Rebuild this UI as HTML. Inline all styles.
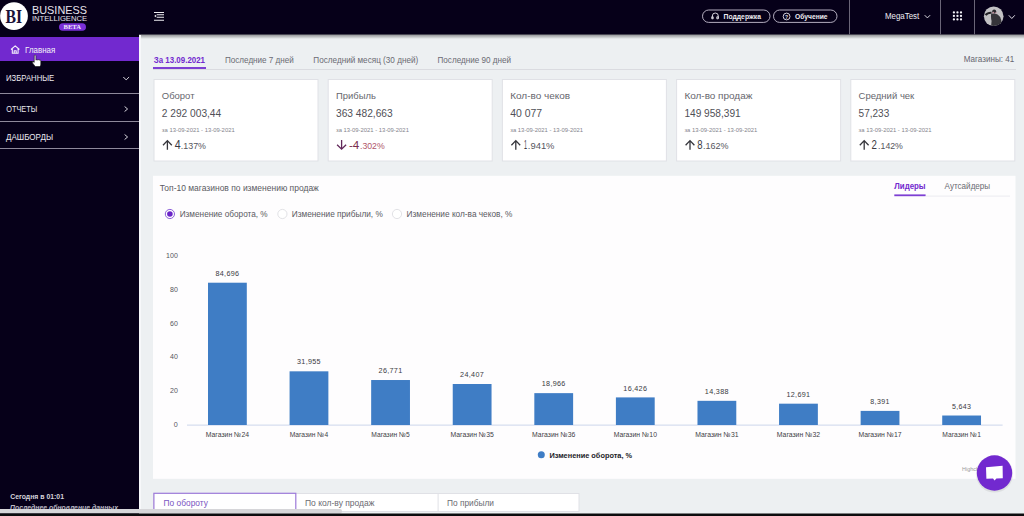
<!DOCTYPE html><html><head><meta charset="utf-8"><style>html,body{margin:0;padding:0;width:1024px;height:516px;overflow:hidden;background:#fff}</style></head><body><svg width="1024" height="516" viewBox="0 0 1024 516" style="display:block"><rect x="0" y="0" width="1024" height="516" fill="#edf0f2" />
<defs><linearGradient id="sh" x1="0" y1="0" x2="0" y2="1"><stop offset="0" stop-color="#000" stop-opacity=".45"/><stop offset="1" stop-color="#000" stop-opacity="0"/></linearGradient></defs>
<rect x="139" y="34" width="885" height="5" fill="url(#sh)" />
<rect x="0" y="0" width="139" height="516" fill="#060019" />
<rect x="139" y="35" width="2" height="474" fill="#f7f8fa" />
<rect x="139" y="0" width="885" height="34.5" fill="#060019" />
<circle cx="14" cy="16.1" r="13.9" fill="#fff"/>
<text x="5.40" y="22.70" font-size="19.19" font-family="Liberation Serif" font-weight="bold" font-style="normal" fill="#1a1238" textLength="16.60" lengthAdjust="spacingAndGlyphs" >BI</text>
<text x="32.00" y="13.70" font-size="10.76" font-family="Liberation Sans" font-weight="normal" font-style="normal" fill="#e6e4ec" textLength="55.00" lengthAdjust="spacingAndGlyphs" >BUSINESS</text>
<text x="32.00" y="21.00" font-size="7.70" font-family="Liberation Sans" font-weight="normal" font-style="normal" fill="#e6e4ec" textLength="55.00" lengthAdjust="spacingAndGlyphs" >INTELLIGENCE</text>
<rect x="59" y="23.2" width="27" height="7.6" rx="3.8" fill="#7a30d8"/>
<text x="63.50" y="29.30" font-size="5.81" font-family="Liberation Serif" font-weight="bold" font-style="normal" fill="#f0eaf8" textLength="17.50" lengthAdjust="spacingAndGlyphs" >BETA</text>
<rect x="0" y="37" width="139" height="24" fill="#7229cf" />
<path d="M11 49.5 L15.2 45.8 L19.4 49.5 M12.3 48.6 V53.3 H18.1 V48.6 M14.2 53.3 V50.8 H16.2 V53.3" fill="none" stroke="#f2eefa" stroke-width="1.1" stroke-linejoin="round"/>
<text x="25.10" y="53.10" font-size="8.14" font-family="Liberation Sans" font-weight="normal" font-style="normal" fill="#f4f2f8" textLength="30.20" lengthAdjust="spacingAndGlyphs" >Главная</text>
<path d="M34.3 55.3 q1.1-.6 1.6.4 v4.4 q.8-.7 1.7-.2 q.9-.5 1.6.2 q1-.4 1.6.5 v3.6 q0 1.4-1 2.3 h-4.6 l-2.7-3.6 q-.5-1 .6-1.3 l1.1.8 z" fill="#fff" stroke="#111" stroke-width=".6"/>
<text x="6.00" y="80.80" font-size="8.58" font-family="Liberation Sans" font-weight="normal" font-style="normal" fill="#ebe9f0" textLength="48.20" lengthAdjust="spacingAndGlyphs" >ИЗБРАННЫЕ</text>
<path d="M123.3 77 L126.2 79.9 L129.1 77" fill="none" stroke="#d8d6de" stroke-width="1"/>
<rect x="0" y="93" width="139" height="1" fill="#8e899b" />
<text x="6.30" y="111.70" font-size="8.58" font-family="Liberation Sans" font-weight="normal" font-style="normal" fill="#ebe9f0" textLength="30.90" lengthAdjust="spacingAndGlyphs" >ОТЧЕТЫ</text>
<path d="M124.6 106.5 L127.6 109 L124.6 111.5" fill="none" stroke="#d8d6de" stroke-width="1"/>
<rect x="0" y="121" width="139" height="1" fill="#8e899b" />
<text x="6.00" y="140.00" font-size="8.58" font-family="Liberation Sans" font-weight="normal" font-style="normal" fill="#ebe9f0" textLength="47.00" lengthAdjust="spacingAndGlyphs" >ДАШБОРДЫ</text>
<path d="M124.6 134.5 L127.6 137 L124.6 139.5" fill="none" stroke="#d8d6de" stroke-width="1"/>
<rect x="0" y="148" width="139" height="1" fill="#8e899b" />
<text x="10.20" y="498.80" font-size="6.98" font-family="Liberation Sans" font-weight="bold" font-style="normal" fill="#d6d4dc" textLength="53.80" lengthAdjust="spacingAndGlyphs" >Сегодня в 01:01</text>
<text x="10.00" y="509.80" font-size="6.98" font-family="Liberation Sans" font-weight="bold" font-style="italic" fill="#bcb9c4" textLength="108.00" lengthAdjust="spacingAndGlyphs" >Последнее обновление данных</text>
<path d="M154 12.5 H164 M156.8 14.8 H164 M156.8 17.3 H164 M154 20.2 H164" stroke="#eeedf2" stroke-width="1.05"/>
<path d="M154.2 16 L156.2 14.6 V17.4 Z" fill="#eeedf2"/>
<rect x="702.5" y="10" width="67.5" height="12.4" rx="6.2" fill="none" stroke="#b3adbf" stroke-width="1"/>
<rect x="773.5" y="10" width="63.5" height="12.4" rx="6.2" fill="none" stroke="#b3adbf" stroke-width="1"/>
<path d="M712.3 18.6 V16 a3 3 0 0 1 6 0 V18.6 M711.8 16.8 h1.4 v2 h-1.4z M716.8 16.8 h1.4 v2 h-1.4z" fill="none" stroke="#e6e4ec" stroke-width=".9"/>
<text x="723.60" y="18.90" font-size="7.12" font-family="Liberation Sans" font-weight="bold" font-style="normal" fill="#eeedf2" textLength="37.30" lengthAdjust="spacingAndGlyphs" >Поддержка</text>
<circle cx="786.6" cy="16.5" r="3.4" fill="none" stroke="#e6e4ec" stroke-width=".9"/>
<text x="786.6" y="18.6" font-size="5" font-family="Liberation Sans" font-weight="bold" fill="#e6e4ec" text-anchor="middle">?</text>
<text x="795.00" y="18.90" font-size="7.12" font-family="Liberation Sans" font-weight="bold" font-style="normal" fill="#eeedf2" textLength="32.60" lengthAdjust="spacingAndGlyphs" >Обучение</text>
<rect x="849" y="0" width="1" height="34.5" fill="#6a6578" />
<text x="884.90" y="19.00" font-size="8.58" font-family="Liberation Sans" font-weight="normal" font-style="normal" fill="#eeedf2" textLength="34.40" lengthAdjust="spacingAndGlyphs" >MegaTest</text>
<path d="M924.7 15.2 L927.4 17.9 L930.1 15.2" fill="none" stroke="#dddbe3" stroke-width="1"/>
<rect x="940" y="0" width="1" height="34.5" fill="#6a6578" />
<circle cx="953.90" cy="12.40" r="1.15" fill="#f4f2f8"/><circle cx="953.90" cy="15.90" r="1.15" fill="#f4f2f8"/><circle cx="953.90" cy="19.40" r="1.15" fill="#f4f2f8"/><circle cx="957.45" cy="12.40" r="1.15" fill="#f4f2f8"/><circle cx="957.45" cy="15.90" r="1.15" fill="#f4f2f8"/><circle cx="957.45" cy="19.40" r="1.15" fill="#f4f2f8"/><circle cx="961.00" cy="12.40" r="1.15" fill="#f4f2f8"/><circle cx="961.00" cy="15.90" r="1.15" fill="#f4f2f8"/><circle cx="961.00" cy="19.40" r="1.15" fill="#f4f2f8"/>
<rect x="974" y="0" width="1" height="34.5" fill="#6a6578" />
<defs><clipPath id="av"><circle cx="993.7" cy="16.3" r="9.8"/></clipPath></defs>
<circle cx="993.7" cy="16.3" r="9.8" fill="#c2c1c4"/>
<g clip-path="url(#av)"><path d="M985.6 15.2 Q987.5 12.6 991.5 12.8" fill="none" stroke="#232226" stroke-width="2"/><circle cx="994.2" cy="11.4" r="2" fill="#2a292d"/><path d="M991.2 13.6 Q995 13 997.6 14.6 Q1000.6 16.5 1001.2 20 L1002 27 H991 L991.6 21 Q990.6 17 991.2 13.6 Z" fill="#36353a"/><circle cx="993.4" cy="12.6" r=".9" fill="#c08a98"/><circle cx="996" cy="12.8" r=".7" fill="#c08a98"/></g>
<path d="M1008.8 15.3 L1011.8 18.5 L1014.8 15.3" fill="none" stroke="#dddbe3" stroke-width="1"/>
<text x="153.80" y="63.20" font-size="9.16" font-family="Liberation Sans" font-weight="bold" font-style="normal" fill="#7229cf" textLength="51.20" lengthAdjust="spacingAndGlyphs" >За 13.09.2021</text>
<rect x="153" y="67" width="53" height="2" fill="#7d3fd3" />
<rect x="153" y="69" width="863" height="1" fill="#dadbe0" />
<text x="225.00" y="63.00" font-size="9.01" font-family="Liberation Sans" font-weight="normal" font-style="normal" fill="#6b6b72" textLength="68.80" lengthAdjust="spacingAndGlyphs" >Последние 7 дней</text>
<text x="313.30" y="63.00" font-size="9.01" font-family="Liberation Sans" font-weight="normal" font-style="normal" fill="#6b6b72" textLength="104.90" lengthAdjust="spacingAndGlyphs" >Последний месяц (30 дней)</text>
<text x="437.50" y="63.00" font-size="9.01" font-family="Liberation Sans" font-weight="normal" font-style="normal" fill="#6b6b72" textLength="73.50" lengthAdjust="spacingAndGlyphs" >Последние 90 дней</text>
<text x="963.80" y="62.40" font-size="8.43" font-family="Liberation Sans" font-weight="normal" font-style="normal" fill="#666670" textLength="50.40" lengthAdjust="spacingAndGlyphs" >Магазины: 41</text>
<rect x="154.00" y="79.5" width="164" height="81.5" fill="#fff" stroke="#e0e1e6" stroke-width="1"/>
<text x="161.80" y="98.90" font-size="9.88" font-family="Liberation Sans" font-weight="normal" font-style="normal" fill="#66666d" textLength="32.70" lengthAdjust="spacingAndGlyphs" >Оборот</text>
<text x="161.80" y="117.00" font-size="10.17" font-family="Liberation Sans" font-weight="normal" font-style="normal" fill="#505057" textLength="59.40" lengthAdjust="spacingAndGlyphs" >2 292 003,44</text>
<text x="161.80" y="132.20" font-size="6.10" font-family="Liberation Sans" font-weight="normal" font-style="normal" fill="#85858d" textLength="72.90" lengthAdjust="spacingAndGlyphs" >за 13-09-2021 - 13-09-2021</text>
<path d="M167.40 149.8 V140.6 M163.00 145.2 L167.40 140.6 L171.80 145.2" fill="none" stroke="#35353b" stroke-width="1.3"/>
<text x="174.70" y="149.30" font-size="11.92" font-family="Liberation Sans" font-weight="normal" font-style="normal" fill="#3a3a42" textLength="5.90" lengthAdjust="spacingAndGlyphs" >4</text>
<text x="180.80" y="149.30" font-size="9.59" font-family="Liberation Sans" font-weight="normal" font-style="normal" fill="#55555d" textLength="25.20" lengthAdjust="spacingAndGlyphs" >.137%</text>
<rect x="328.20" y="79.5" width="164" height="81.5" fill="#fff" stroke="#e0e1e6" stroke-width="1"/>
<text x="336.00" y="98.90" font-size="9.88" font-family="Liberation Sans" font-weight="normal" font-style="normal" fill="#66666d" textLength="39.90" lengthAdjust="spacingAndGlyphs" >Прибыль</text>
<text x="336.00" y="117.00" font-size="10.17" font-family="Liberation Sans" font-weight="normal" font-style="normal" fill="#505057" textLength="56.70" lengthAdjust="spacingAndGlyphs" >363 482,663</text>
<text x="336.00" y="132.20" font-size="6.10" font-family="Liberation Sans" font-weight="normal" font-style="normal" fill="#85858d" textLength="72.90" lengthAdjust="spacingAndGlyphs" >за 13-09-2021 - 13-09-2021</text>
<path d="M341.60 140 V149.2 M337.10 144.8 L341.60 149.2 L346.10 144.8" fill="none" stroke="#62285a" stroke-width="1.3"/>
<text x="349.00" y="149.30" font-size="11.63" font-family="Liberation Sans" font-weight="normal" font-style="normal" fill="#7a2c4c" textLength="10.30" lengthAdjust="spacingAndGlyphs" >-4</text>
<text x="360.00" y="149.30" font-size="9.59" font-family="Liberation Sans" font-weight="normal" font-style="normal" fill="#b0566a" textLength="24.70" lengthAdjust="spacingAndGlyphs" >.302%</text>
<rect x="502.40" y="79.5" width="164" height="81.5" fill="#fff" stroke="#e0e1e6" stroke-width="1"/>
<text x="510.20" y="98.90" font-size="9.88" font-family="Liberation Sans" font-weight="normal" font-style="normal" fill="#66666d" textLength="60.00" lengthAdjust="spacingAndGlyphs" >Кол-во чеков</text>
<text x="510.20" y="117.00" font-size="10.17" font-family="Liberation Sans" font-weight="normal" font-style="normal" fill="#505057" textLength="32.00" lengthAdjust="spacingAndGlyphs" >40 077</text>
<text x="510.20" y="132.20" font-size="6.10" font-family="Liberation Sans" font-weight="normal" font-style="normal" fill="#85858d" textLength="72.90" lengthAdjust="spacingAndGlyphs" >за 13-09-2021 - 13-09-2021</text>
<path d="M515.80 149.8 V140.6 M511.40 145.2 L515.80 140.6 L520.20 145.2" fill="none" stroke="#35353b" stroke-width="1.3"/>
<text x="523.90" y="149.30" font-size="11.92" font-family="Liberation Sans" font-weight="normal" font-style="normal" fill="#3a3a42" textLength="3.00" lengthAdjust="spacingAndGlyphs" >1</text>
<text x="527.80" y="149.30" font-size="9.59" font-family="Liberation Sans" font-weight="normal" font-style="normal" fill="#55555d" textLength="26.70" lengthAdjust="spacingAndGlyphs" >.941%</text>
<rect x="676.60" y="79.5" width="164" height="81.5" fill="#fff" stroke="#e0e1e6" stroke-width="1"/>
<text x="684.40" y="98.90" font-size="9.88" font-family="Liberation Sans" font-weight="normal" font-style="normal" fill="#66666d" textLength="68.00" lengthAdjust="spacingAndGlyphs" >Кол-во продаж</text>
<text x="684.40" y="117.00" font-size="10.17" font-family="Liberation Sans" font-weight="normal" font-style="normal" fill="#505057" textLength="56.30" lengthAdjust="spacingAndGlyphs" >149 958,391</text>
<text x="684.40" y="132.20" font-size="6.10" font-family="Liberation Sans" font-weight="normal" font-style="normal" fill="#85858d" textLength="72.90" lengthAdjust="spacingAndGlyphs" >за 13-09-2021 - 13-09-2021</text>
<path d="M690.00 149.8 V140.6 M685.60 145.2 L690.00 140.6 L694.40 145.2" fill="none" stroke="#35353b" stroke-width="1.3"/>
<text x="697.30" y="149.30" font-size="11.92" font-family="Liberation Sans" font-weight="normal" font-style="normal" fill="#3a3a42" textLength="5.30" lengthAdjust="spacingAndGlyphs" >8</text>
<text x="703.10" y="149.30" font-size="9.59" font-family="Liberation Sans" font-weight="normal" font-style="normal" fill="#55555d" textLength="25.50" lengthAdjust="spacingAndGlyphs" >.162%</text>
<rect x="850.80" y="79.5" width="164" height="81.5" fill="#fff" stroke="#e0e1e6" stroke-width="1"/>
<text x="858.60" y="98.90" font-size="9.88" font-family="Liberation Sans" font-weight="normal" font-style="normal" fill="#66666d" textLength="55.70" lengthAdjust="spacingAndGlyphs" >Средний чек</text>
<text x="858.60" y="117.00" font-size="10.17" font-family="Liberation Sans" font-weight="normal" font-style="normal" fill="#505057" textLength="30.70" lengthAdjust="spacingAndGlyphs" >57,233</text>
<text x="858.60" y="132.20" font-size="6.10" font-family="Liberation Sans" font-weight="normal" font-style="normal" fill="#85858d" textLength="72.90" lengthAdjust="spacingAndGlyphs" >за 13-09-2021 - 13-09-2021</text>
<path d="M864.20 149.8 V140.6 M859.80 145.2 L864.20 140.6 L868.60 145.2" fill="none" stroke="#35353b" stroke-width="1.3"/>
<text x="871.40" y="149.30" font-size="11.92" font-family="Liberation Sans" font-weight="normal" font-style="normal" fill="#3a3a42" textLength="5.40" lengthAdjust="spacingAndGlyphs" >2</text>
<text x="878.10" y="149.30" font-size="9.59" font-family="Liberation Sans" font-weight="normal" font-style="normal" fill="#55555d" textLength="24.80" lengthAdjust="spacingAndGlyphs" >.142%</text>
<rect x="153" y="175.8" width="862.5" height="303" fill="#fefdfe" />
<text x="159.80" y="191.20" font-size="8.28" font-family="Liberation Sans" font-weight="normal" font-style="normal" fill="#5a5a62" textLength="159.00" lengthAdjust="spacingAndGlyphs" >Топ-10 магазинов по изменению продаж</text>
<text x="894.30" y="189.20" font-size="9.01" font-family="Liberation Sans" font-weight="bold" font-style="normal" fill="#7229cf" textLength="31.30" lengthAdjust="spacingAndGlyphs" >Лидеры</text>
<rect x="894.3" y="194.4" width="31.3" height="1.8" fill="#7d3fd3" />
<rect x="926" y="195.6" width="84" height="1" fill="#ececf0" />
<text x="944.60" y="189.20" font-size="8.72" font-family="Liberation Sans" font-weight="normal" font-style="normal" fill="#6b6b72" textLength="45.60" lengthAdjust="spacingAndGlyphs" >Аутсайдеры</text>
<circle cx="169.9" cy="214" r="4.6" fill="#fff" stroke="#8d5fd8" stroke-width="1"/><circle cx="169.9" cy="214" r="2.8" fill="#6a24c8"/>
<text x="179.70" y="217.30" font-size="8.43" font-family="Liberation Sans" font-weight="normal" font-style="normal" fill="#5a5a62" textLength="88.00" lengthAdjust="spacingAndGlyphs" >Изменение оборота, %</text>
<circle cx="282.4" cy="214" r="4.6" fill="#fff" stroke="#e2e2e6" stroke-width="1"/>
<text x="291.80" y="217.30" font-size="8.43" font-family="Liberation Sans" font-weight="normal" font-style="normal" fill="#5a5a62" textLength="91.00" lengthAdjust="spacingAndGlyphs" >Изменение прибыли, %</text>
<circle cx="397" cy="214" r="4.6" fill="#fff" stroke="#e2e2e6" stroke-width="1"/>
<text x="406.60" y="217.30" font-size="8.43" font-family="Liberation Sans" font-weight="normal" font-style="normal" fill="#5a5a62" textLength="105.80" lengthAdjust="spacingAndGlyphs" >Изменение кол-ва чеков, %</text>
<text x="173.80" y="427.20" font-size="6.40" font-family="Liberation Sans" font-weight="normal" font-style="normal" fill="#55555d" textLength="4.00" lengthAdjust="spacingAndGlyphs" >0</text>
<text x="170.00" y="393.33" font-size="6.40" font-family="Liberation Sans" font-weight="normal" font-style="normal" fill="#55555d" textLength="7.80" lengthAdjust="spacingAndGlyphs" >20</text>
<text x="170.00" y="359.46" font-size="6.40" font-family="Liberation Sans" font-weight="normal" font-style="normal" fill="#55555d" textLength="7.80" lengthAdjust="spacingAndGlyphs" >40</text>
<text x="170.00" y="325.59" font-size="6.40" font-family="Liberation Sans" font-weight="normal" font-style="normal" fill="#55555d" textLength="7.80" lengthAdjust="spacingAndGlyphs" >60</text>
<text x="170.00" y="291.72" font-size="6.40" font-family="Liberation Sans" font-weight="normal" font-style="normal" fill="#55555d" textLength="7.80" lengthAdjust="spacingAndGlyphs" >80</text>
<text x="166.10" y="257.85" font-size="6.40" font-family="Liberation Sans" font-weight="normal" font-style="normal" fill="#55555d" textLength="11.70" lengthAdjust="spacingAndGlyphs" >100</text>
<rect x="187" y="424.6" width="815.6" height="1" fill="#ccd6eb" />
<rect x="208.0" y="282.71" width="38.8" height="142.29" fill="#3f7dc5" />
<text x="215.40" y="275.81" font-size="6.40" font-family="Liberation Sans" font-weight="normal" font-style="normal" fill="#3a3a42" textLength="24.00" lengthAdjust="spacingAndGlyphs" letter-spacing=".3">84,696</text>
<text x="205.75" y="437.00" font-size="7.27" font-family="Liberation Sans" font-weight="normal" font-style="normal" fill="#3e3e46" textLength="43.30" lengthAdjust="spacingAndGlyphs" >Магазин №24</text>
<rect x="289.58" y="371.32" width="38.8" height="53.68" fill="#3f7dc5" />
<text x="296.98" y="364.42" font-size="6.40" font-family="Liberation Sans" font-weight="normal" font-style="normal" fill="#3a3a42" textLength="24.00" lengthAdjust="spacingAndGlyphs" letter-spacing=".3">31,955</text>
<text x="289.68" y="437.00" font-size="7.27" font-family="Liberation Sans" font-weight="normal" font-style="normal" fill="#3e3e46" textLength="38.60" lengthAdjust="spacingAndGlyphs" >Магазин №4</text>
<rect x="371.16" y="380.02" width="38.8" height="44.98" fill="#3f7dc5" />
<text x="378.56" y="373.12" font-size="6.40" font-family="Liberation Sans" font-weight="normal" font-style="normal" fill="#3a3a42" textLength="24.00" lengthAdjust="spacingAndGlyphs" letter-spacing=".3">26,771</text>
<text x="371.26" y="437.00" font-size="7.27" font-family="Liberation Sans" font-weight="normal" font-style="normal" fill="#3e3e46" textLength="38.60" lengthAdjust="spacingAndGlyphs" >Магазин №5</text>
<rect x="452.74" y="384.0" width="38.8" height="41.0" fill="#3f7dc5" />
<text x="460.14" y="377.10" font-size="6.40" font-family="Liberation Sans" font-weight="normal" font-style="normal" fill="#3a3a42" textLength="24.00" lengthAdjust="spacingAndGlyphs" letter-spacing=".3">24,407</text>
<text x="450.49" y="437.00" font-size="7.27" font-family="Liberation Sans" font-weight="normal" font-style="normal" fill="#3e3e46" textLength="43.30" lengthAdjust="spacingAndGlyphs" >Магазин №35</text>
<rect x="534.32" y="393.14" width="38.8" height="31.86" fill="#3f7dc5" />
<text x="541.72" y="386.24" font-size="6.40" font-family="Liberation Sans" font-weight="normal" font-style="normal" fill="#3a3a42" textLength="24.00" lengthAdjust="spacingAndGlyphs" letter-spacing=".3">18,966</text>
<text x="532.07" y="437.00" font-size="7.27" font-family="Liberation Sans" font-weight="normal" font-style="normal" fill="#3e3e46" textLength="43.30" lengthAdjust="spacingAndGlyphs" >Магазин №36</text>
<rect x="615.9" y="397.4" width="38.8" height="27.6" fill="#3f7dc5" />
<text x="623.30" y="390.50" font-size="6.40" font-family="Liberation Sans" font-weight="normal" font-style="normal" fill="#3a3a42" textLength="24.00" lengthAdjust="spacingAndGlyphs" letter-spacing=".3">16,426</text>
<text x="613.65" y="437.00" font-size="7.27" font-family="Liberation Sans" font-weight="normal" font-style="normal" fill="#3e3e46" textLength="43.30" lengthAdjust="spacingAndGlyphs" >Магазин №10</text>
<rect x="697.48" y="400.83" width="38.8" height="24.17" fill="#3f7dc5" />
<text x="704.88" y="393.93" font-size="6.40" font-family="Liberation Sans" font-weight="normal" font-style="normal" fill="#3a3a42" textLength="24.00" lengthAdjust="spacingAndGlyphs" letter-spacing=".3">14,388</text>
<text x="695.23" y="437.00" font-size="7.27" font-family="Liberation Sans" font-weight="normal" font-style="normal" fill="#3e3e46" textLength="43.30" lengthAdjust="spacingAndGlyphs" >Магазин №31</text>
<rect x="779.06" y="403.68" width="38.8" height="21.32" fill="#3f7dc5" />
<text x="786.46" y="396.78" font-size="6.40" font-family="Liberation Sans" font-weight="normal" font-style="normal" fill="#3a3a42" textLength="24.00" lengthAdjust="spacingAndGlyphs" letter-spacing=".3">12,691</text>
<text x="776.81" y="437.00" font-size="7.27" font-family="Liberation Sans" font-weight="normal" font-style="normal" fill="#3e3e46" textLength="43.30" lengthAdjust="spacingAndGlyphs" >Магазин №32</text>
<rect x="860.64" y="410.9" width="38.8" height="14.1" fill="#3f7dc5" />
<text x="870.39" y="404.00" font-size="6.40" font-family="Liberation Sans" font-weight="normal" font-style="normal" fill="#3a3a42" textLength="19.30" lengthAdjust="spacingAndGlyphs" letter-spacing=".3">8,391</text>
<text x="858.39" y="437.00" font-size="7.27" font-family="Liberation Sans" font-weight="normal" font-style="normal" fill="#3e3e46" textLength="43.30" lengthAdjust="spacingAndGlyphs" >Магазин №17</text>
<rect x="942.22" y="415.52" width="38.8" height="9.48" fill="#3f7dc5" />
<text x="951.97" y="408.62" font-size="6.40" font-family="Liberation Sans" font-weight="normal" font-style="normal" fill="#3a3a42" textLength="19.30" lengthAdjust="spacingAndGlyphs" letter-spacing=".3">5,643</text>
<text x="942.32" y="437.00" font-size="7.27" font-family="Liberation Sans" font-weight="normal" font-style="normal" fill="#3e3e46" textLength="38.60" lengthAdjust="spacingAndGlyphs" >Магазин №1</text>
<circle cx="541.3" cy="454.7" r="3.5" fill="#3f7dc5"/>
<text x="549.40" y="457.60" font-size="7.27" font-family="Liberation Sans" font-weight="bold" font-style="normal" fill="#222228" textLength="82.70" lengthAdjust="spacingAndGlyphs" >Изменение оборота, %</text>
<text x="962.00" y="470.50" font-size="5.09" font-family="Liberation Sans" font-weight="normal" font-style="normal" fill="#999" textLength="38.00" lengthAdjust="spacingAndGlyphs" >Highcharts.com</text>
<circle cx="994.5" cy="474" r="18.6" fill="#000" opacity=".07"/><circle cx="994.5" cy="473" r="17.7" fill="#7229cf"/>
<path d="M986 467.2 L1002.6 465.8 L1002.8 478.2 L996.4 478.4 L994.6 480.4 L993 478.6 L986.4 478.8 Z" fill="#fff"/>
<rect x="153.5" y="493.5" width="425.5" height="18" fill="#fff" stroke="#e0e1e6" stroke-width="1"/>
<rect x="437.6" y="493.5" width="1" height="18" fill="#e0e1e6" />
<rect x="153.9" y="493.3" width="141.9" height="18.2" fill="#fff" stroke="#9d7ad9" stroke-width="1.2"/>
<text x="163.60" y="506.40" font-size="8.72" font-family="Liberation Sans" font-weight="normal" font-style="normal" fill="#7a56c2" textLength="44.30" lengthAdjust="spacingAndGlyphs" >По обороту</text>
<text x="305.00" y="506.40" font-size="8.72" font-family="Liberation Sans" font-weight="normal" font-style="normal" fill="#6b6b72" textLength="69.50" lengthAdjust="spacingAndGlyphs" >По кол-ву продаж</text>
<text x="447.00" y="506.40" font-size="8.72" font-family="Liberation Sans" font-weight="normal" font-style="normal" fill="#6b6b72" textLength="46.90" lengthAdjust="spacingAndGlyphs" >По прибыли</text>
<rect x="-2" y="509" width="344" height="4.5" rx="2" fill="#d6d6d9"/>
<rect x="0" y="513.5" width="1024" height="2.5" fill="#0c0c0e" /></svg></body></html>
